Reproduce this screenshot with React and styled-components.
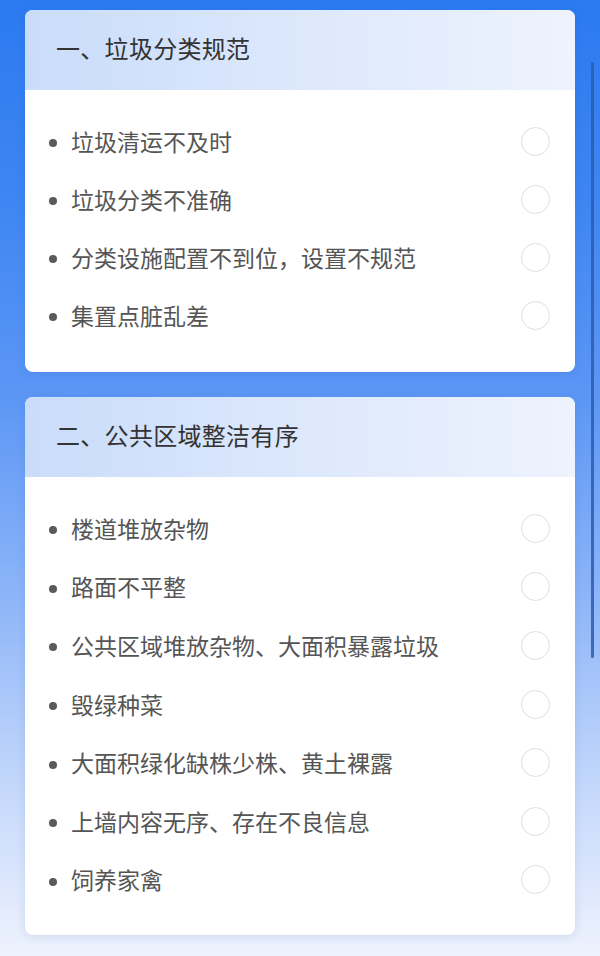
import React from "react";
import styled, { createGlobalStyle } from "styled-components";

const Global = createGlobalStyle`
  html, body { margin: 0; padding: 0; }
  body {
    font-family: "Noto Sans CJK SC", "Noto Sans", sans-serif;
    background: #eef2fd;
  }
`;

const Page = styled.div`
  position: relative;
  min-height: 956px;
  box-sizing: border-box;
  padding: 10px 25px 21px;
  display: flex;
  flex-direction: column;
  gap: 25px;
  background: linear-gradient(
    180deg,
    #2c7af0 0%,
    #3d85f2 20%,
    #5d97f5 42%,
    #8cb4f8 62%,
    #c3d7fb 82%,
    #eef2fd 100%
  );
`;

const Card = styled.section`
  background: #ffffff;
  border-radius: 8px;
  overflow: hidden;
  box-shadow: 0 2px 8px rgba(30, 70, 150, 0.12);
`;

const CardHeader = styled.div`
  height: 80px;
  box-sizing: border-box;
  display: flex;
  align-items: center;
  padding: 0 30px 4px 31px;
  background: linear-gradient(90deg, #c9dcfa 0%, #dbe7fc 45%, #eef3fd 100%);
  color: #333333;
  font-size: 24px;
  line-height: 1;
  letter-spacing: 0.3px;
`;

const List = styled.ul`
  list-style: none;
  margin: 0;
  padding: 24px 0 ${(p) => p.$bottom}px;
`;

const Row = styled.li`
  height: ${(p) => p.$h}px;
  display: flex;
  align-items: center;
  padding: 0 25px 0 24px;
`;

const Bullet = styled.span`
  width: 8px;
  height: 8px;
  border-radius: 50%;
  background: #5a5a5a;
  flex: none;
  margin-right: 14px;
`;

const Label = styled.span`
  flex: 1;
  color: #555555;
  font-size: 23px;
  line-height: 1;
  padding-bottom: 4px;
`;

const Radio = styled.span`
  width: 27px;
  height: 27px;
  border-radius: 50%;
  border: 1.5px solid #dedede;
  flex: none;
  margin-bottom: 4px;
`;

const ScrollThumb = styled.div`
  position: absolute;
  top: 62px;
  right: 6px;
  width: 3px;
  height: 596px;
  border-radius: 2px;
  background: #2b5cae;
  opacity: 0.85;
`;

const sections = [
  {
    title: "一、垃圾分类规范",
    rowH: 58,
    bottom: 26,
    items: ["垃圾清运不及时", "垃圾分类不准确", "分类设施配置不到位，设置不规范", "集置点脏乱差"],
  },
  {
    title: "二、公共区域整洁有序",
    rowH: 58.6,
    bottom: 24,
    items: [
      "楼道堆放杂物",
      "路面不平整",
      "公共区域堆放杂物、大面积暴露垃圾",
      "毁绿种菜",
      "大面积绿化缺株少株、黄土裸露",
      "上墙内容无序、存在不良信息",
      "饲养家禽",
    ],
  },
];

export default function App() {
  return (
    <>
      <Global />
      <Page>
        {sections.map((s) => (
          <Card key={s.title}>
            <CardHeader>{s.title}</CardHeader>
            <List $bottom={s.bottom}>
              {s.items.map((it) => (
                <Row key={it} $h={s.rowH}>
                  <Bullet />
                  <Label>{it}</Label>
                  <Radio />
                </Row>
              ))}
            </List>
          </Card>
        ))}
        <ScrollThumb />
      </Page>
    </>
  );
}
